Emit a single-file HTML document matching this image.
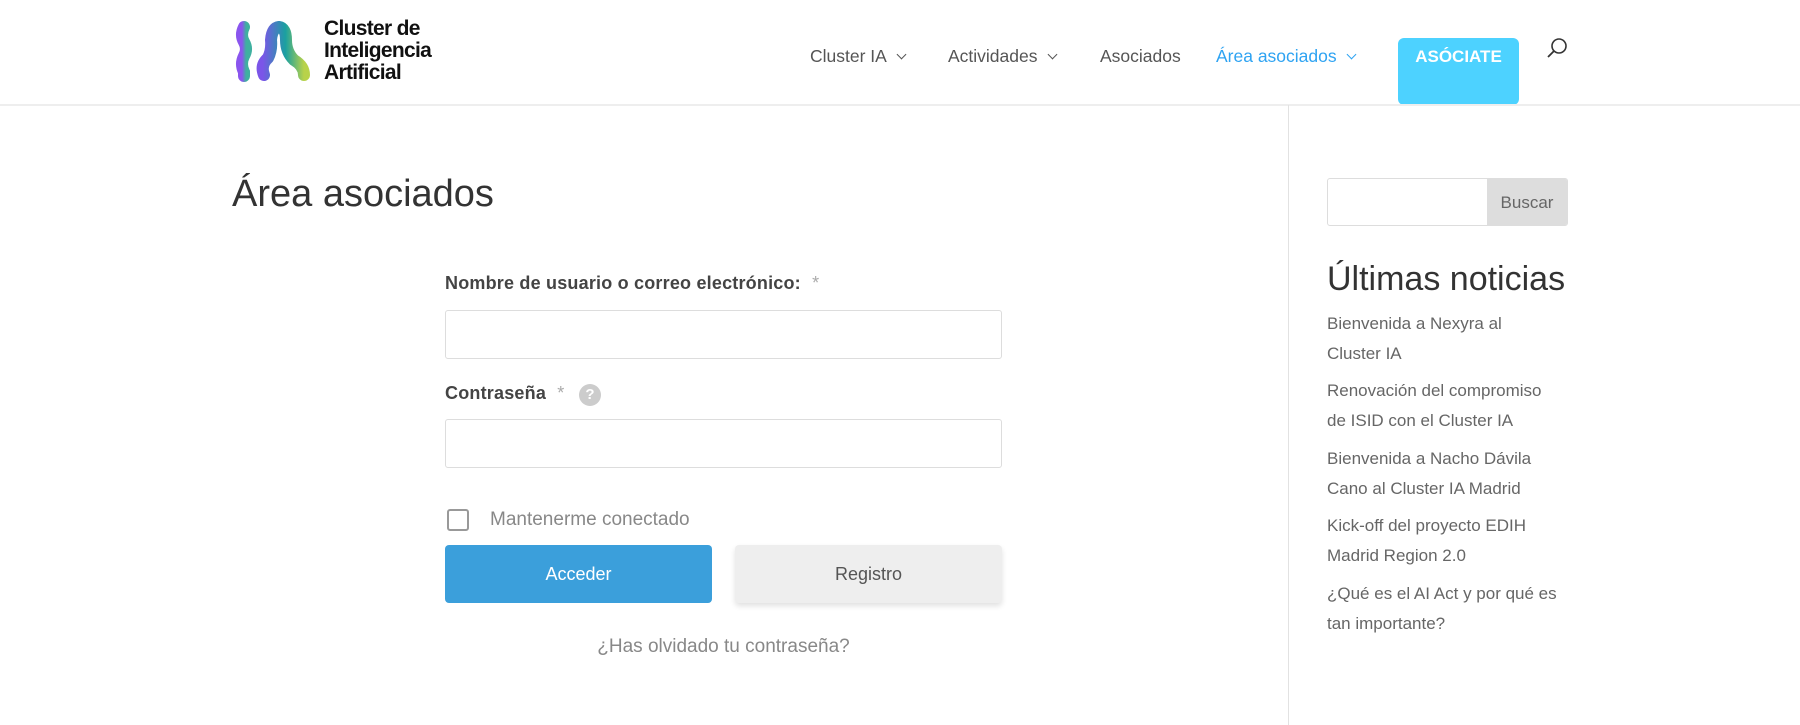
<!DOCTYPE html>
<html><head><meta charset="utf-8"><style>
*{margin:0;padding:0;box-sizing:border-box}
body{width:1800px;height:718px;overflow:hidden;background:#fff;font-family:"Liberation Sans",sans-serif;position:relative;color:#333}
.a{position:absolute;white-space:nowrap}
.nav{font-size:17.5px;color:#555;top:46px}
.chev{display:inline-block;width:7px;height:7px;border-right:1.6px solid currentColor;border-bottom:1.6px solid currentColor;transform:rotate(45deg);margin-left:11px;position:relative;top:-4px}
.inp{position:absolute;border:1px solid #ddd;border-radius:3px;background:#fff}
.news{font-size:17px;color:#666;line-height:29.5px;left:1327px}
</style></head><body>
<svg class="a" style="left:234px;top:20px" width="80" height="64" viewBox="0 0 80 64">
<defs><linearGradient id="g" x1="0" x2="1" y1="0" y2="0"><stop offset="0" stop-color="#7b55e8"/><stop offset="0.55" stop-color="#1aa0a0"/><stop offset="1" stop-color="#b8d24a"/></linearGradient>
<linearGradient id="g2" x1="0" x2="1"><stop offset="0" stop-color="#8a55ee"/><stop offset="1" stop-color="#3fb0a0"/></linearGradient></defs>
<g stroke="url(#g2)" stroke-width="12" stroke-linecap="round" fill="none">
<path d="M10 7 Q6 15 10 22 Q14 29 10 36 Q6 44 10 52 L10 56"/></g>
<g stroke="url(#g)" stroke-width="12" stroke-linecap="round" stroke-linejoin="round" fill="none">
<path d="M30 55 Q26 45 34 38 Q38 30 37 20 Q38 8 45 7 Q52 8 52 20 Q52 32 60 40 Q70 46 70 55"/></g>
</svg>
<div class="a" style="left:324px;top:18px;font-size:21px;font-weight:bold;line-height:22px;color:#111;letter-spacing:-0.7px">Cluster de<br>Inteligencia<br>Artificial</div>
<div class="a nav" style="left:810px">Cluster IA<span class="chev"></span></div>
<div class="a nav" style="left:948px">Actividades<span class="chev"></span></div>
<div class="a nav" style="left:1100px">Asociados</div>
<div class="a nav" style="left:1216px;color:#2ea3f2">Área asociados<span class="chev"></span></div>
<div class="a" style="left:1398px;top:38px;width:121px;height:67px;background:#4dd2ff;border-radius:6px;color:#fff;font-weight:bold;font-size:17px;text-align:center;padding-top:9px">ASÓCIATE</div>
<svg class="a" style="left:1545px;top:36px" width="24" height="24" viewBox="0 0 24 24"><circle cx="14" cy="10" r="7" fill="none" stroke="#333" stroke-width="1.6"/><path d="M9 15 L3 21" stroke="#333" stroke-width="1.8"/></svg>
<div class="a" style="left:0;top:104px;width:1800px;height:2px;background:#eee"></div>
<div class="a" style="left:1288px;top:105px;width:1px;height:620px;background:#e2e2e2"></div>
<div class="a" style="left:232px;top:173px;font-size:38px;color:#333">Área asociados</div>
<div class="a" style="left:445px;top:273px;font-size:18px;font-weight:bold;color:#444;letter-spacing:0.2px">Nombre de usuario o correo electrónico: <span style="color:#aaa;font-weight:normal;margin-left:6px">*</span></div>
<div class="inp" style="left:445px;top:310px;width:557px;height:49px"></div>
<div class="a" style="left:445px;top:383px;font-size:18px;font-weight:bold;color:#444;letter-spacing:0.2px">Contraseña <span style="color:#aaa;font-weight:normal;margin-left:6px">*</span></div>
<div class="a" style="left:579px;top:384px;width:22px;height:22px;border-radius:50%;background:#ccc;color:#fff;font-weight:bold;font-size:15px;text-align:center;line-height:22px">?</div>
<div class="inp" style="left:445px;top:419px;width:557px;height:49px"></div>
<div class="a" style="left:447px;top:509px;width:22px;height:22px;border:2px solid #999;border-radius:3px"></div>
<div class="a" style="left:490px;top:509px;font-size:19px;color:#888">Mantenerme conectado</div>
<div class="a" style="left:445px;top:545px;width:267px;height:58px;background:#3b9fdb;border-radius:4px;color:#fff;font-size:18px;text-align:center;line-height:58px">Acceder</div>
<div class="a" style="left:735px;top:545px;width:267px;height:58px;background:#eee;border-radius:4px;color:#555;font-size:18px;text-align:center;line-height:58px;box-shadow:0 3px 6px rgba(0,0,0,.12)">Registro</div>
<div class="a" style="left:445px;width:557px;top:636px;font-size:19px;color:#888;text-align:center">¿Has olvidado tu contraseña?</div>
<div class="inp" style="left:1327px;top:178px;width:241px;height:48px;overflow:hidden"><div style="position:absolute;right:0;top:0;width:80px;height:48px;background:#ddd;color:#666;font-size:17px;text-align:center;line-height:48px">Buscar</div></div>
<div class="a" style="left:1327px;top:260px;font-size:34px;color:#333">Últimas noticias</div>
<div class="a news" style="top:309px">Bienvenida a Nexyra al<br>Cluster IA</div>
<div class="a news" style="top:376px">Renovación del compromiso<br>de ISID con el Cluster IA</div>
<div class="a news" style="top:444px">Bienvenida a Nacho Dávila<br>Cano al Cluster IA Madrid</div>
<div class="a news" style="top:511px">Kick-off del proyecto EDIH<br>Madrid Region 2.0</div>
<div class="a news" style="top:579px">¿Qué es el AI Act y por qué es<br>tan importante?</div>
</body></html>
